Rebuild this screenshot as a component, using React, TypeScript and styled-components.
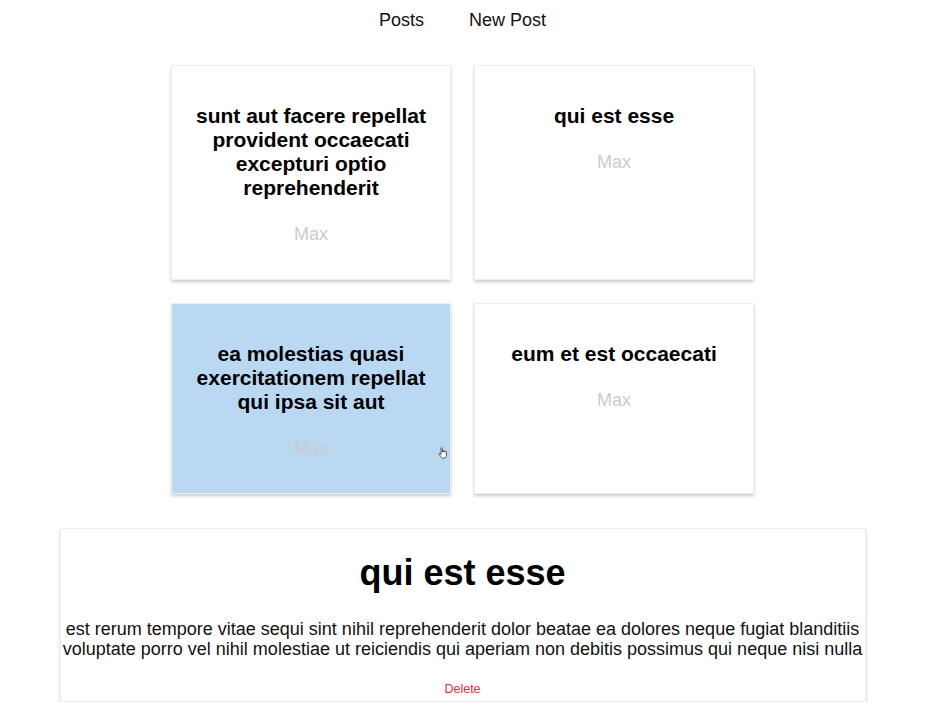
import React from 'react';
import styled, { createGlobalStyle } from 'styled-components';

const posts = [
  { id: 1, title: 'sunt aut facere repellat provident occaecati excepturi optio reprehenderit', author: 'Max' },
  { id: 2, title: 'qui est esse', author: 'Max' },
  { id: 3, title: 'ea molestias quasi exercitationem repellat qui ipsa sit aut', author: 'Max', hovered: true },
  { id: 4, title: 'eum et est occaecati', author: 'Max' },
];

const selectedBody =
  'est rerum tempore vitae sequi sint nihil reprehenderit dolor beatae ea dolores neque fugiat blanditiis voluptate porro vel nihil molestiae ut reiciendis qui aperiam non debitis possimus qui neque nisi nulla';

function HandCursor(): React.ReactElement {
  return (
    <Cursor width="11" height="12" viewBox="0 0 11 12">
      <path
        d="M3 1.2c0-.7 1.2-.7 1.2 0V5h.3V4c0-.6 1.1-.6 1.1 0v1h.3v-.7c0-.6 1.1-.6 1.1 0V5h.3c0-.6 1.1-.6 1.1 0v3.2c0 1.6-.9 3-2.3 3H5c-1 0-1.6-.6-2.2-1.5L1 7.4c-.4-.6.4-1.3.9-.8L3 7.6z"
        fill="#fff"
        stroke="#333"
        strokeWidth="0.8"
      />
    </Cursor>
  );
}

function App(): React.ReactElement {
  return (
    <Page>
      <GlobalStyle />
      <Nav>
        <NavLink>Posts</NavLink>
        <NavLink>New Post</NavLink>
      </Nav>
      <Posts>
        {posts.map((post) => (
          <Post key={post.id} hovered={post.hovered}>
            <PostTitle>{post.title}</PostTitle>
            <Author>{post.author}</Author>
            {post.hovered && <HandCursor />}
          </Post>
        ))}
      </Posts>
      <FullPost>
        <FullTitle>qui est esse</FullTitle>
        <Body>{selectedBody}</Body>
        <DeleteButton>Delete</DeleteButton>
      </FullPost>
    </Page>
  );
}

export default App;

const GlobalStyle = createGlobalStyle`
  body {
    margin: 0;
    background: #fff;
    font-family: "Liberation Sans", Arial, sans-serif;
    color: #000;
  }
`;

const Page = styled.div`
  width: 925px;
  display: flex;
  flex-direction: column;
  align-items: center;
`;

const Nav = styled.nav`
  display: flex;
  justify-content: center;
  gap: 45px;
  padding-top: 10px;
  height: 54px;
  box-sizing: border-box;
`;

const NavLink = styled.a`
  font-size: 18px;
  line-height: 21px;
  color: #111;
  cursor: pointer;
`;

const Posts = styled.section`
  display: flex;
  flex-wrap: wrap;
  justify-content: center;
  gap: 23px;
  width: 584px;
  margin-top: 11px;
`;

const Post = styled.article<{ hovered?: boolean }>`
  position: relative;
  width: 280px;
  box-sizing: border-box;
  padding: 18px;
  border: 1px solid #eee;
  box-shadow: 0 2px 3px #ccc;
  text-align: center;
  background: ${(p) => (p.hovered ? '#bbd8f2' : '#fff')};
  cursor: pointer;
`;

const PostTitle = styled.h1`
  margin: 20px 0 24px;
  font-size: 21px;
  line-height: 24px;
  font-weight: bold;
`;

const Author = styled.div`
  margin: 0 0 16px;
  font-size: 18px;
  line-height: 21px;
  color: #ccc;
`;

const Cursor = styled.svg`
  position: absolute;
  left: 266px;
  top: 143px;
`;

const FullPost = styled.div`
  width: 806px;
  box-sizing: border-box;
  margin-top: 34px;
  border: 1px solid #eee;
  box-shadow: 0 2px 3px #ccc;
  text-align: center;
`;

const FullTitle = styled.h1`
  margin: 23px 0 0;
  font-size: 36px;
  line-height: 42px;
  font-weight: bold;
`;

const Body = styled.p`
  margin: 25px 0 0;
  font-size: 18px;
  line-height: 20px;
  color: #111;
`;

const DeleteButton = styled.button`
  display: block;
  margin: 23px auto 5px;
  padding: 0;
  border: none;
  background: transparent;
  font-family: "Liberation Sans", Arial, sans-serif;
  font-size: 12.5px;
  line-height: 14px;
  color: #e0303f;
  cursor: pointer;
`;
